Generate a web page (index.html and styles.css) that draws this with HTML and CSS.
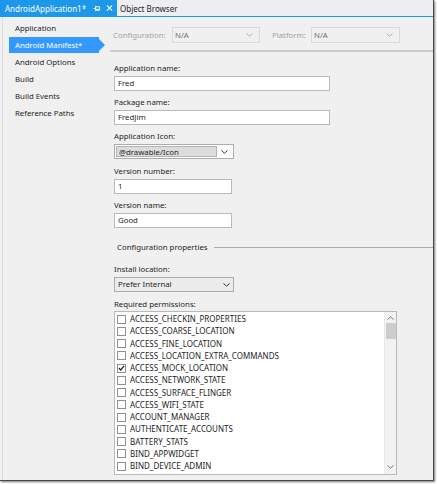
FILE: index.html
```html
<!DOCTYPE html>
<html>
<head>
<meta charset="utf-8">
<title>AndroidApplication1</title>
<link rel="stylesheet" href="styles.css">
</head>
<body>
<div class="window">
  <div class="tabbar">
    <div class="tab tab-active">
      <span class="tab-title">AndroidApplication1*</span>
      <svg class="tab-pin" width="9" height="7" viewBox="0 0 9 7"><path d="M0.5 3.5H3M3 0.5V6.5M3 1.5H7.5V5.5H3M3 4.5H7.5" fill="none" stroke="#fff" stroke-width="1"/></svg>
      <svg class="tab-close" width="8" height="8" viewBox="0 0 8 8"><path d="M1 1L7 7M7 1L1 7" stroke="#fff" stroke-width="1.3"/></svg>
    </div>
    <div class="tab">Object Browser</div>
  </div>
  <div class="tabline"></div>
  <div class="main">
    <nav class="nav">
      <div class="nav-item">Application</div>
      <div class="nav-item nav-selected">Android Manifest*</div>
      <div class="nav-item">Android Options</div>
      <div class="nav-item">Build</div>
      <div class="nav-item">Build Events</div>
      <div class="nav-item">Reference Paths</div>
    </nav>
    <section class="content">
      <div class="configbar">
        <span class="cfg-label">Configuration:</span>
        <div class="cfg-drop cfg-drop-config"><span>N/A</span><svg class="chev" width="7" height="4" viewBox="0 0 7 4"><path d="M0.5 0.5L3.5 3.2L6.5 0.5" fill="none" stroke="#b0b0b0" stroke-width="1"/></svg></div>
        <span class="cfg-label cfg-label-platform">Platform:</span>
        <div class="cfg-drop cfg-drop-platform"><span>N/A</span><svg class="chev" width="7" height="4" viewBox="0 0 7 4"><path d="M0.5 0.5L3.5 3.2L6.5 0.5" fill="none" stroke="#b0b0b0" stroke-width="1"/></svg></div>
      </div>
      <div class="cfg-rule"></div>
      <div class="form">
        <div class="field">
          <div class="label">Application name:</div>
          <div class="input input-wide">Fred</div>
        </div>
        <div class="field">
          <div class="label">Package name:</div>
          <div class="input input-wide">FredJim</div>
        </div>
        <div class="field field-combo">
          <div class="label">Application Icon:</div>
          <div class="combo combo-edit">
            <div class="combo-text">@drawable/Icon</div>
            <div class="combo-btn"><svg width="7" height="4" viewBox="0 0 7 4"><path d="M0.5 0.5L3.5 3.2L6.5 0.5" fill="none" stroke="#333" stroke-width="1"/></svg></div>
          </div>
        </div>
        <div class="field">
          <div class="label">Version number:</div>
          <div class="input input-short">1</div>
        </div>
        <div class="field">
          <div class="label">Version name:</div>
          <div class="input input-short">Good</div>
        </div>
        <div class="section-head">
          <span>Configuration properties</span>
          <div class="section-line"></div>
        </div>
        <div class="field field-combo">
          <div class="label">Install location:</div>
          <div class="combo combo-list">
            <div class="combo-text">Prefer Internal</div>
            <div class="combo-btn"><svg width="7" height="4" viewBox="0 0 7 4"><path d="M0.5 0.5L3.5 3.2L6.5 0.5" fill="none" stroke="#333" stroke-width="1"/></svg></div>
          </div>
        </div>
        <div class="label label-perm">Required permissions:</div>
        <div class="listbox">
          <div class="list-items">
            <div class="perm"><span class="cb"></span>ACCESS_CHECKIN_PROPERTIES</div>
            <div class="perm"><span class="cb"></span>ACCESS_COARSE_LOCATION</div>
            <div class="perm"><span class="cb"></span>ACCESS_FINE_LOCATION</div>
            <div class="perm"><span class="cb"></span>ACCESS_LOCATION_EXTRA_COMMANDS</div>
            <div class="perm"><span class="cb cb-checked"><svg width="7" height="6" viewBox="0 0 7 6"><path d="M0.8 3L2.7 5L6.2 0.8" fill="none" stroke="#222" stroke-width="1.2"/></svg></span>ACCESS_MOCK_LOCATION</div>
            <div class="perm"><span class="cb"></span>ACCESS_NETWORK_STATE</div>
            <div class="perm"><span class="cb"></span>ACCESS_SURFACE_FLINGER</div>
            <div class="perm"><span class="cb"></span>ACCESS_WIFI_STATE</div>
            <div class="perm"><span class="cb"></span>ACCOUNT_MANAGER</div>
            <div class="perm"><span class="cb"></span>AUTHENTICATE_ACCOUNTS</div>
            <div class="perm"><span class="cb"></span>BATTERY_STATS</div>
            <div class="perm"><span class="cb"></span>BIND_APPWIDGET</div>
            <div class="perm"><span class="cb"></span>BIND_DEVICE_ADMIN</div>
          </div>
          <div class="scrollbar">
            <svg class="sb-arrow" width="7" height="4" viewBox="0 0 7 4"><path d="M0.5 3.5L3.5 0.8L6.5 3.5" fill="none" stroke="#777" stroke-width="1"/></svg>
            <div class="sb-thumb"></div>
            <div class="sb-track"></div>
            <svg class="sb-arrow" width="7" height="4" viewBox="0 0 7 4"><path d="M0.5 0.5L3.5 3.2L6.5 0.5" fill="none" stroke="#777" stroke-width="1"/></svg>
          </div>
        </div>
      </div>
    </section>
  </div>
</div>
</body>
</html>
```
FILE: styles.css
```css
* { box-sizing: border-box; }

html, body {
  margin: 0;
  padding: 0;
  background: #ffffff;
}

body {
  width: 437px;
  height: 484px;
  overflow: hidden;
  font-family: "Noto Sans", "Open Sans", sans-serif;
  font-size: 7.8px;
  color: #1e1e1e;
}

.window {
  width: 434px;
  height: 481px;
  background: #f0f0f0;
  border-right: 1px solid #4a4a4a;
  border-bottom: 1px solid #4a4a4a;
  box-shadow: 1px 1px 2px rgba(0, 0, 0, 0.55);
  display: flex;
  flex-direction: column;
}

/* Tabs */
.tabbar {
  height: 16px;
  background: #eeeef2;
  display: flex;
  align-items: stretch;
}

.tab {
  display: flex;
  align-items: center;
  padding: 0 4px 0 3px;
  font-size: 8px;
  color: #1e1e1e;
}

.tab-active {
  width: 117px;
  background: #1c97ea;
  color: #ffffff;
  padding-left: 5px;
}

.tab-title { flex: 0 0 auto; }

.tab-pin { margin-left: 7px; }
.tab-close { margin-left: 5px; }

.tabline {
  height: 1px;
  background: #1c97ea;
}

/* Main */
.main {
  flex: 1;
  display: flex;
  min-height: 0;
}

.nav {
  width: 108px;
  padding-top: 3px;
  border-left: 1px solid #dcdcdc;
  margin-left: 2px;
}

.nav-item {
  height: 16px;
  line-height: 16px;
  margin: 0 0 1px 6px;
  padding-left: 6px;
  width: 90px;
  position: relative;
}

.nav-selected {
  background: #3399ff;
  color: #ffffff;
}

.nav-selected::after {
  content: "";
  position: absolute;
  right: -6px;
  top: 2px;
  border-left: 6px solid #3399ff;
  border-top: 6px solid transparent;
  border-bottom: 6px solid transparent;
}

.content {
  flex: 1;
  min-width: 0;
  margin-left: -2px;
}

/* Config bar */
.configbar {
  margin-top: 9px;
  height: 17px;
  display: flex;
  align-items: center;
  padding-left: 5px;
}

.cfg-label {
  color: #a2a2a2;
  width: 59px;
}

.cfg-label-platform {
  width: 39px;
  margin-left: 12px;
}

.cfg-drop {
  height: 16px;
  border: 1px solid #dadada;
  display: flex;
  align-items: center;
  justify-content: space-between;
  padding: 0 6px 0 2px;
  color: #707070;
}

.cfg-drop-config { width: 88px; }
.cfg-drop-platform { width: 89px; }

.cfg-rule {
  margin: 7px 0 0 2px;
  height: 2px;
  background: #cbcbcb;
}

/* Form */
.form {
  padding: 10px 0 0 6px;
}

.field {
  margin-bottom: 5px;
}

.field-combo {
  margin-bottom: 6px;
}

.label {
  height: 12px;
  line-height: 12px;
  margin-bottom: 2px;
}

.input {
  height: 15px;
  line-height: 13px;
  background: #ffffff;
  border: 1px solid #b9b9b9;
  padding-left: 3px;
}

.input-wide { width: 216px; }
.input-short { width: 118px; }

.combo {
  width: 120px;
  height: 15px;
  display: flex;
  border: 1px solid #acacac;
}

.combo-edit {
  background: #ffffff;
  padding: 1px;
}

.combo-edit .combo-text {
  flex: 1;
  background: #dcdcdc;
  border: 1px solid #b4b4b4;
  line-height: 10px;
  padding-left: 2px;
}

.combo-edit .combo-btn {
  width: 15px;
  display: flex;
  align-items: center;
  justify-content: center;
}

.combo-list {
  background: #ececec;
}

.combo-list .combo-text {
  flex: 1;
  line-height: 13px;
  padding-left: 3px;
}

.combo-list .combo-btn {
  width: 14px;
  display: flex;
  align-items: center;
  justify-content: center;
}

.section-head {
  display: flex;
  align-items: center;
  margin-top: 13px;
  height: 12px;
  padding-left: 3px;
}

.section-head span { flex: 0 0 auto; }

.section-line {
  flex: 1;
  height: 1px;
  background: #a8a8a8;
  margin-left: 6px;
}

.section-head + .field { margin-top: 10px; }

.label-perm { margin-bottom: 1px; }

/* List */
.listbox {
  width: 283px;
  height: 164px;
  border: 1px solid #b9b9b9;
  background: #ffffff;
  display: flex;
}

.list-items {
  flex: 1;
  padding-top: 1px;
  font-size: 8px;
}

.perm {
  height: 12.25px;
  line-height: 12.25px;
  display: flex;
  align-items: center;
  padding-left: 2px;
}

.cb {
  width: 9px;
  height: 9px;
  border: 1px solid #8f8f8f;
  background: #ffffff;
  margin-right: 4px;
  display: flex;
  align-items: center;
  justify-content: center;
}

.cb-checked { border-color: #8f8f8f; }

.scrollbar {
  width: 12px;
  background: #f2f2f2;
  border-left: 1px solid #e8e8e8;
  display: flex;
  flex-direction: column;
  align-items: center;
  padding: 4px 0 5px;
}

.sb-arrow { flex: 0 0 auto; }

.sb-thumb {
  width: 10px;
  height: 16px;
  margin-top: 3px;
  background: #cdcdcd;
}

.sb-track { flex: 1; }
```
